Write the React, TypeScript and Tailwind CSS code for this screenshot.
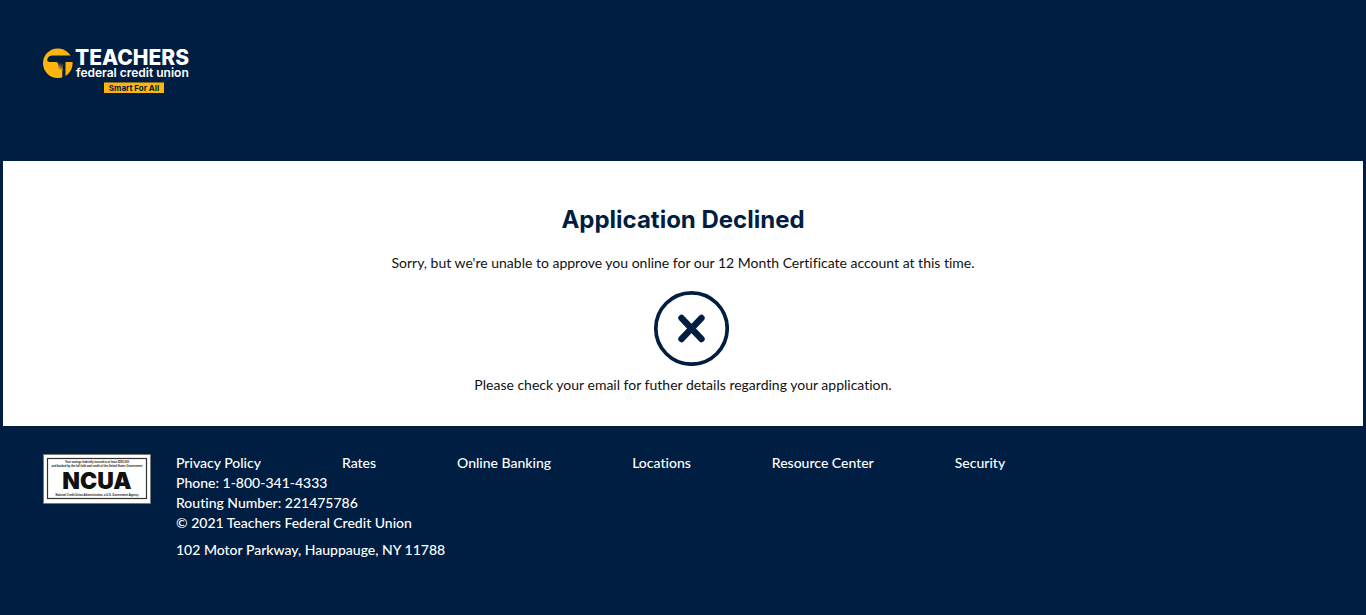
const links = ["Privacy Policy", "Rates", "Online Banking", "Locations", "Resource Center", "Security"];

function TeachersLogo() {
  return (
    <svg viewBox="0 0 156 48" className="block h-12 w-[156px] overflow-visible" role="img" aria-label="Teachers Federal Credit Union, Smart For All">
      <defs>
        <linearGradient id="stem" x1="0.3" y1="0" x2="0" y2="1">
          <stop offset="0" stopColor="#001e41" />
          <stop offset="0.3" stopColor="#5c4a3a" />
          <stop offset="0.8" stopColor="#fdb50d" />
        </linearGradient>
      </defs>
      <circle cx="14.800" cy="15.300" r="14.800" fill="#fdb50d" />
      <path d="M4.300 11C5.300 8.500 7 7.500 9.500 7.500H30V14H22.500V30H19.300V14H7C4.800 14 3.800 13 4.300 11Z" fill="#001e41" />
      <path d="M13.500 13.800H21V16.500C20 17 19.500 18 19.500 20V23H15C16 19 15.500 15.500 13.500 13.800Z" fill="url(#stem)" />
      <text x="32" y="17" fill="#fff" fontFamily="Inter, sans-serif" fontWeight="800" fontSize="21">TEACHERS</text>
      <text x="33" y="29" fill="#fff" fontFamily="Inter, sans-serif" fontWeight="600" fontSize="12">federal credit union</text>
      <rect x="61" y="34.500" width="60" height="10.500" fill="#fdb50d" />
      <text x="91" y="42.700" textAnchor="middle" fill="#001e41" fontFamily="Inter, sans-serif" fontWeight="700" fontSize="8">Smart For All</text>
    </svg>
  );
}

function NcuaBadge() {
  return (
    <svg viewBox="0 0 108 50" className="block h-[50px] w-[108px] shrink-0" role="img" aria-label="NCUA">
      <rect x="0.500" y="0.500" width="107" height="49" fill="#fff" stroke="#777" />
      <rect x="4.500" y="4.500" width="99" height="40" fill="none" stroke="#333" strokeWidth="1.200" />
      <g fill="#111" fontFamily="Liberation Sans, sans-serif" fontWeight="700" textAnchor="middle">
        <text x="54" y="9" fontSize="2.700">Your savings federally insured to at least $250,000</text>
        <text x="54" y="12.500" fontSize="2.700">and backed by the full faith and credit of the United States Government</text>
        <text x="54" y="34.500" fontSize="23" fontFamily="Inter, sans-serif" fontWeight="900">NCUA</text>
        <text x="54" y="42" fontSize="2.700">National Credit Union Administration, a U.S. Government Agency</text>
      </g>
    </svg>
  );
}

export default function App() {
  return (
    <div className="min-h-screen bg-[#001e41] px-[3px] font-[Lato,sans-serif] text-sm leading-5 [font-variant-ligatures:none]">
      <header className="px-10 pt-12 pb-[65px]">
        <TeachersLogo />
      </header>
      <main className="flex flex-col items-center bg-white px-10 pt-[45px] pb-[31px] text-center text-[#111]">
        <h1 className="font-[Inter,sans-serif] text-2xl leading-7 font-bold text-[#001e41]">Application Declined</h1>
        <p className="mt-[19px]">Sorry, but we're unable to approve you online for our 12 Month Certificate account at this time.</p>
        <svg viewBox="0 0 76 76" className="mt-[17px] ml-4 size-[76px]" fill="none" stroke="#001e41" aria-hidden="true">
          <circle cx="38.500" cy="38.500" r="35.700" strokeWidth="3.700" />
          <path d="M28.500 28L48.500 49M48.500 28L28.500 49" strokeWidth="6.400" strokeLinecap="round" />
        </svg>
        <p className="mt-[9px]">Please check your email for futher details regarding your application.</p>
      </main>
      <footer className="flex gap-[25px] px-10 pt-7 text-white">
        <NcuaBadge />
        <div className="-mt-px font-medium">
          <nav className="flex flex-wrap gap-x-[81px]">
            {links.map((label) => (
              <a key={label} href="#">{label}</a>
            ))}
          </nav>
          <p>Phone: 1-800-341-4333</p>
          <p>Routing Number: 221475786</p>
          <p>© 2021 Teachers Federal Credit Union</p>
          <p className="mt-[7px]">102 Motor Parkway, Hauppauge, NY 11788</p>
        </div>
      </footer>
    </div>
  );
}
